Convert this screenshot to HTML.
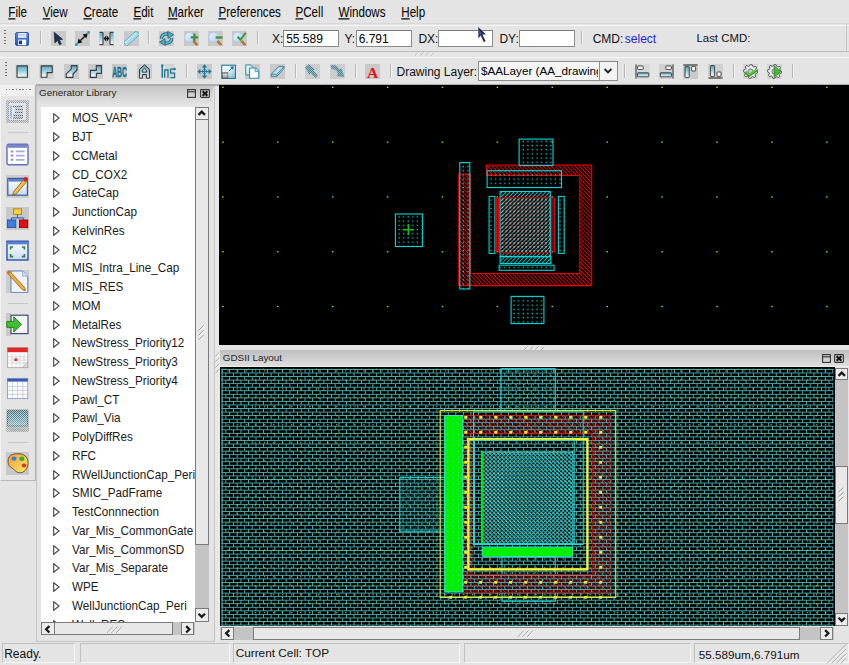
<!DOCTYPE html>
<html><head><meta charset="utf-8"><title>Layout Editor</title>
<style>
html,body{margin:0;padding:0;}
body{width:849px;height:665px;overflow:hidden;position:relative;background:#e4e4e4;font-family:"Liberation Sans", sans-serif;}
.t{position:absolute;white-space:nowrap;}
.b{position:absolute;box-sizing:border-box;}
u{text-decoration:underline;text-underline-offset:1px;}
</style></head><body>

<svg width="0" height="0" style="position:absolute"><defs>

<linearGradient id="gTeal" x1="0" y1="0" x2="0" y2="1"><stop offset="0" stop-color="#5aa8c0"/><stop offset="0.45" stop-color="#9ccfdc"/><stop offset="1" stop-color="#ffffff"/></linearGradient>
<linearGradient id="gTealD" x1="0" y1="0" x2="1" y2="1"><stop offset="0" stop-color="#ffffff"/><stop offset="0.5" stop-color="#d8eef4"/><stop offset="1" stop-color="#6ab4c8"/></linearGradient>
<linearGradient id="gBlue" x1="0" y1="0" x2="0" y2="1"><stop offset="0" stop-color="#5a88e0"/><stop offset="1" stop-color="#2a58b8"/></linearGradient>
<linearGradient id="gMag" x1="0" y1="0" x2="1" y2="1"><stop offset="0" stop-color="#f4f8ff"/><stop offset="1" stop-color="#a8c8f0"/></linearGradient>
<linearGradient id="gWin" x1="0" y1="0" x2="0" y2="1"><stop offset="0" stop-color="#ffffff"/><stop offset="1" stop-color="#c8daf4"/></linearGradient>
<linearGradient id="gPal" x1="0" y1="0" x2="1" y2="1"><stop offset="0" stop-color="#f09a40"/><stop offset="1" stop-color="#f4f060"/></linearGradient>
<linearGradient id="gMon" x1="0" y1="0" x2="0" y2="1"><stop offset="0" stop-color="#2a6a78"/><stop offset="1" stop-color="#8ab8c4"/></linearGradient>
<pattern id="pChk" patternUnits="userSpaceOnUse" width="2" height="2"><rect width="1" height="1" fill="#e4e4e4"/><rect x="1" y="1" width="1" height="1" fill="#e4e4e4"/></pattern>

<pattern id="pDotC" patternUnits="userSpaceOnUse" width="4.6" height="4.2" x="0.8" y="0.6"><rect x="1.5" y="1.5" width="1.25" height="1.25" fill="#10dede"/></pattern>
<pattern id="pHatchR" patternUnits="userSpaceOnUse" width="2.8" height="2.8" patternTransform="rotate(-45)"><rect x="0" y="0" width="0.95" height="2.8" fill="#e80000"/></pattern>
<pattern id="pHatchR2" patternUnits="userSpaceOnUse" width="2.8" height="2.8" patternTransform="rotate(-45)"><rect x="0" y="0" width="0.8" height="2.8" fill="#d00000"/></pattern>
<pattern id="pHatchRg" patternUnits="userSpaceOnUse" width="2.7" height="2.7" patternTransform="rotate(-45)"><rect x="0" y="0" width="1.0" height="2.7" fill="#e00000"/></pattern>
<pattern id="pHatchC2" patternUnits="userSpaceOnUse" width="2.8" height="2.8" patternTransform="rotate(-45)"><rect x="0" y="0" width="0.9" height="2.8" fill="#00d0d0"/></pattern>
<pattern id="pRedDot" patternUnits="userSpaceOnUse" width="3.96" height="3.96" x="481" y="452"><rect x="1.5" y="0.6" width="1.4" height="1.2" fill="#e81010"/></pattern>
<pattern id="pDotW" patternUnits="userSpaceOnUse" width="3.96" height="3.96" x="500" y="197.6"><rect x="1.2" y="1.2" width="1.4" height="1.4" fill="#d8f0f0" opacity="0.85"/></pattern>
<pattern id="pDotG" patternUnits="userSpaceOnUse" width="5.4" height="5.4" x="447" y="418"><rect x="0" y="0" width="1.1" height="1.1" fill="#40d8b0"/></pattern>
<pattern id="pHatchCt" patternUnits="userSpaceOnUse" width="2.8" height="2.8" patternTransform="rotate(45)"><rect x="0" y="0" width="0.85" height="2.8" fill="#10d8d8"/></pattern>
<pattern id="pHatchC2t" patternUnits="userSpaceOnUse" width="2.8" height="2.8" patternTransform="rotate(-45)"><rect x="0" y="0" width="0.85" height="2.8" fill="#10d8d8"/></pattern>
<pattern id="pDotWg" patternUnits="userSpaceOnUse" width="3.96" height="3.96" x="482" y="453.4"><rect x="0" y="0" width="1.2" height="1.2" fill="#d0e8d8" opacity="0.7"/></pattern>
<pattern id="pHatchC" patternUnits="userSpaceOnUse" width="2.8" height="2.8" patternTransform="rotate(45)"><rect x="0" y="0" width="0.9" height="2.8" fill="#00d0d0"/></pattern>
<pattern id="pHatchCdim" patternUnits="userSpaceOnUse" width="2.8" height="2.8" patternTransform="rotate(45)"><rect x="0" y="0" width="0.6" height="2.8" fill="#107878"/></pattern>
<pattern id="pDotCdim" patternUnits="userSpaceOnUse" width="4.5" height="4.5"><rect x="1.5" y="1.5" width="1.2" height="1.2" fill="#10b0b0"/></pattern>
<pattern id="pBrick" patternUnits="userSpaceOnUse" x="221.4" y="369" width="7.54" height="7.1"><rect x="0" y="0" width="7.54" height="0.9" fill="#4ab0b0"/><rect x="0" y="3.55" width="7.54" height="0.9" fill="#4ab0b0"/><rect x="0" y="0" width="0.95" height="3.55" fill="#4ab0b0"/><rect x="3.77" y="3.55" width="0.95" height="3.55" fill="#4ab0b0"/></pattern>
<pattern id="pYDot" patternUnits="userSpaceOnUse" x="227.4" y="370.3" width="9.05" height="8.95"><rect x="0" y="0" width="1.3" height="1.3" fill="#c8c820" opacity="0.8"/></pattern>
</defs></svg>
<div class="b" style="left:0.00px;top:0.00px;width:849.00px;height:23.00px;background:#e4e4e4;"></div>
<div class="b" style="left:0.00px;top:23.00px;width:849.00px;height:1.00px;background:#d8d8d8;"></div>
<div class="t" style="left:8.30px;top:6.98px;font-size:11.6px;line-height:11.6px;color:#000;transform:scaleY(1.22);transform-origin:0 9.82px;text-underline-offset:1.2px;"><u>F</u>ile</div>
<div class="t" style="left:42.70px;top:6.98px;font-size:11.6px;line-height:11.6px;color:#000;transform:scaleY(1.22);transform-origin:0 9.82px;text-underline-offset:1.2px;"><u>V</u>iew</div>
<div class="t" style="left:83.40px;top:6.98px;font-size:11.6px;line-height:11.6px;color:#000;transform:scaleY(1.22);transform-origin:0 9.82px;text-underline-offset:1.2px;"><u>C</u>reate</div>
<div class="t" style="left:133.40px;top:6.98px;font-size:11.6px;line-height:11.6px;color:#000;transform:scaleY(1.22);transform-origin:0 9.82px;text-underline-offset:1.2px;"><u>E</u>dit</div>
<div class="t" style="left:167.90px;top:6.98px;font-size:11.6px;line-height:11.6px;color:#000;transform:scaleY(1.22);transform-origin:0 9.82px;text-underline-offset:1.2px;"><u>M</u>arker</div>
<div class="t" style="left:218.40px;top:6.98px;font-size:11.6px;line-height:11.6px;color:#000;transform:scaleY(1.22);transform-origin:0 9.82px;text-underline-offset:1.2px;"><u>P</u>references</div>
<div class="t" style="left:295.50px;top:6.98px;font-size:11.6px;line-height:11.6px;color:#000;transform:scaleY(1.22);transform-origin:0 9.82px;text-underline-offset:1.2px;"><u>P</u>Cell</div>
<div class="t" style="left:338.50px;top:6.98px;font-size:11.6px;line-height:11.6px;color:#000;transform:scaleY(1.22);transform-origin:0 9.82px;text-underline-offset:1.2px;"><u>W</u>indows</div>
<div class="t" style="left:401.30px;top:6.98px;font-size:11.6px;line-height:11.6px;color:#000;transform:scaleY(1.22);transform-origin:0 9.82px;text-underline-offset:1.2px;"><u>H</u>elp</div>
<div class="b" style="left:0.00px;top:25.00px;width:849.00px;height:27.00px;background:#e4e4e4;border-top:1px solid #f8f8f8;border-bottom:1px solid #bcbcbc;"></div>
<div class="b" style="left:4.00px;top:30.00px;width:2.00px;height:1.20px;background:#707070;"></div>
<div class="b" style="left:4.00px;top:33.30px;width:2.00px;height:1.20px;background:#707070;"></div>
<div class="b" style="left:4.00px;top:36.60px;width:2.00px;height:1.20px;background:#707070;"></div>
<div class="b" style="left:4.00px;top:39.90px;width:2.00px;height:1.20px;background:#707070;"></div>
<div class="b" style="left:4.00px;top:43.20px;width:2.00px;height:1.20px;background:#707070;"></div>
<svg class="b" style="left:15px;top:31.8px" width="14.2" height="14" viewBox="0 0 14.2 14"><rect x="0.6" y="0.6" width="13" height="12.8" rx="1.2" fill="url(#gBlue)" stroke="#2448a0" stroke-width="0.9"/><rect x="3" y="1" width="8.4" height="4.8" fill="#e6ecf8"/><rect x="3" y="2.6" width="8.4" height="0.8" fill="#9ab0e0"/><rect x="3.2" y="7.6" width="8" height="5.6" fill="#f8faff"/><rect x="4" y="8.6" width="3" height="3.6" fill="#1a3c90"/></svg>
<svg class="b" style="left:51.2px;top:31.2px" width="15" height="15" viewBox="0 0 15 15"><rect width="15" height="15" fill="#c9c9c9"/><path d="M3.2 1.2 L11.6 8.3 L8.3 8.7 L10.3 12.9 L8.5 13.8 L6.6 9.5 L3.9 11.9 Z" fill="#1d3350" stroke="#0e1a2c" stroke-width="0.6" stroke-linejoin="round"/></svg>
<svg class="b" style="left:75.2px;top:31.2px" width="15" height="15" viewBox="0 0 15 15"><rect width="15" height="15" fill="#c9c9c9"/><line x1="3.2" y1="11.8" x2="11.8" y2="3.2" stroke="#111" stroke-width="1.3"/><path d="M12.6 2.4 L7.6 3.6 L11.4 7.4 Z" fill="#111"/><path d="M2.4 12.6 L3.6 7.6 L7.4 11.4 Z" fill="#111"/><circle cx="13.6" cy="1.4" r="1.4" fill="#1a98c0"/><circle cx="1.4" cy="13.6" r="1.4" fill="#1a98c0"/></svg>
<svg class="b" style="left:99px;top:31.2px" width="15" height="15" viewBox="0 0 15 15"><rect width="15" height="15" fill="#c9c9c9"/><path d="M0.8 1.8 H3.6 V13.2 H0.8 Z" fill="url(#gTeal)"/><path d="M0.6 1.4 H4 V13.6 H0.6" stroke="#2a3038" stroke-width="1" fill="none"/><g transform="translate(15 0) scale(-1 1)"><path d="M0.8 1.8 H3.6 V13.2 H0.8 Z" fill="url(#gTeal)"/><path d="M0.6 1.4 H4 V13.6 H0.6" stroke="#2a3038" stroke-width="1" fill="none"/></g><line x1="6" y1="7.5" x2="9" y2="7.5" stroke="#111" stroke-width="1"/><path d="M4.6 7.5 L7.2 4.6 V10.4 Z M10.4 7.5 L7.8 4.6 V10.4 Z" fill="#111"/></svg>
<svg class="b" style="left:123.8px;top:31.2px" width="15" height="15" viewBox="0 0 15 15"><rect width="15" height="15" fill="#c9c9c9"/><g transform="rotate(-42 7.5 7.5)"><rect x="-1.2" y="5" width="17.4" height="5" rx="0.6" fill="#a6dcea" stroke="#5aa0b8" stroke-width="0.8"/><path d="M1 5.4 V7.2 M3 5.4 V6.6 M5 5.4 V7.2 M7 5.4 V6.6 M9 5.4 V7.2 M11 5.4 V6.6 M13 5.4 V7.2" stroke="#ffffff" stroke-width="0.7"/></g></svg>
<svg class="b" style="left:159.2px;top:31.2px" width="15" height="15" viewBox="0 0 15 15"><rect width="15" height="15" fill="#c9c9c9"/><path d="M2.4 8 C2.2 4 6 2 10 3.4" stroke="#1e5a6a" stroke-width="3.2" fill="none"/><path d="M2.4 8 C2.2 4 6 2 10 3.4" stroke="#5ab8cc" stroke-width="1.8" fill="none"/><path d="M8.6 0.4 L14.6 3.8 L9 7.4 Z" fill="#4aa8c0" stroke="#1e5a6a" stroke-width="0.7"/><path d="M12.6 7 C12.8 11 9 13 5 11.6" stroke="#1e5a6a" stroke-width="3.2" fill="none"/><path d="M12.6 7 C12.8 11 9 13 5 11.6" stroke="#5ab8cc" stroke-width="1.8" fill="none"/><path d="M6.4 14.6 L0.4 11.2 L6 7.6 Z" fill="#4aa8c0" stroke="#1e5a6a" stroke-width="0.7"/></svg>
<svg class="b" style="left:184.1px;top:31.2px" width="15" height="15" viewBox="0 0 15 15"><rect width="15" height="15" fill="#c9c9c9"/><line x1="9" y1="9.5" x2="12.6" y2="13.4" stroke="#b87838" stroke-width="2.6" stroke-linecap="round"/><circle cx="5.8" cy="6.4" r="4.9" fill="url(#gMag)" stroke="#b0c8ec" stroke-width="0.8"/><circle cx="5.4" cy="6" r="2.6" fill="none" stroke="#d8e6fa" stroke-width="0.8"/><path d="M10.4 2.6 V10 M6.8 6.3 H14.2" stroke="#3a9a3a" stroke-width="2.3"/></svg>
<svg class="b" style="left:208.2px;top:31.2px" width="15" height="15" viewBox="0 0 15 15"><rect width="15" height="15" fill="#c9c9c9"/><line x1="9" y1="9.5" x2="12.6" y2="13.4" stroke="#b87838" stroke-width="2.6" stroke-linecap="round"/><circle cx="5.8" cy="6.4" r="4.9" fill="url(#gMag)" stroke="#b0c8ec" stroke-width="0.8"/><circle cx="5.4" cy="6" r="2.6" fill="none" stroke="#d8e6fa" stroke-width="0.8"/><path d="M7.6 6.5 H14.6" stroke="#3a9a3a" stroke-width="2.4"/></svg>
<svg class="b" style="left:232.2px;top:31.2px" width="15" height="15" viewBox="0 0 15 15"><rect width="15" height="15" fill="#c9c9c9"/><line x1="9" y1="9.5" x2="12.6" y2="13.4" stroke="#b87838" stroke-width="2.6" stroke-linecap="round"/><circle cx="5.8" cy="6.4" r="4.9" fill="url(#gMag)" stroke="#b0c8ec" stroke-width="0.8"/><circle cx="5.4" cy="6" r="2.6" fill="none" stroke="#d8e6fa" stroke-width="0.8"/><path d="M5.6 5.8 L8.4 8.8 L13.8 1.8" stroke="#3a9a3a" stroke-width="2" fill="none"/></svg>
<div class="b" style="left:39.50px;top:31.40px;width:1.00px;height:13.10px;background:#b8b8b8;"></div>
<div class="b" style="left:40.50px;top:31.40px;width:1.00px;height:13.10px;background:#f4f4f4;"></div>
<div class="b" style="left:148.00px;top:31.40px;width:1.00px;height:13.10px;background:#b8b8b8;"></div>
<div class="b" style="left:149.00px;top:31.40px;width:1.00px;height:13.10px;background:#f4f4f4;"></div>
<div class="b" style="left:257.00px;top:31.40px;width:1.00px;height:13.10px;background:#b8b8b8;"></div>
<div class="b" style="left:258.00px;top:31.40px;width:1.00px;height:13.10px;background:#f4f4f4;"></div>
<div class="t" style="left:272.00px;top:32.84px;font-size:12px;line-height:12px;color:#111;">X:</div>
<div class="b" style="left:283.20px;top:29.70px;width:55.80px;height:17.60px;background:#fff;border:1px solid #8c8c8c;border-top-color:#7a7a7a;"></div>
<div class="t" style="left:286.20px;top:32.84px;font-size:12px;line-height:12px;color:#000;">55.589</div>
<div class="t" style="left:344.50px;top:32.84px;font-size:12px;line-height:12px;color:#111;">Y:</div>
<div class="b" style="left:355.70px;top:29.70px;width:56.30px;height:17.60px;background:#fff;border:1px solid #8c8c8c;border-top-color:#7a7a7a;"></div>
<div class="t" style="left:358.70px;top:32.84px;font-size:12px;line-height:12px;color:#000;">6.791</div>
<div class="t" style="left:418.40px;top:32.84px;font-size:12px;line-height:12px;color:#111;">DX:</div>
<div class="b" style="left:438.40px;top:29.70px;width:55.10px;height:17.60px;background:#fff;border:1px solid #8c8c8c;border-top-color:#7a7a7a;"></div>
<div class="t" style="left:499.40px;top:32.84px;font-size:12px;line-height:12px;color:#111;">DY:</div>
<div class="b" style="left:519.40px;top:29.70px;width:55.60px;height:17.60px;background:#fff;border:1px solid #8c8c8c;border-top-color:#7a7a7a;"></div>
<div class="b" style="left:580.80px;top:31.40px;width:1.00px;height:13.10px;background:#b8b8b8;"></div>
<div class="b" style="left:581.80px;top:31.40px;width:1.00px;height:13.10px;background:#f4f4f4;"></div>
<div class="t" style="left:592.70px;top:32.84px;font-size:12px;line-height:12px;color:#111;">CMD:</div>
<div class="t" style="left:624.80px;top:32.84px;font-size:12px;line-height:12px;color:#2222dd;">select</div>
<div class="t" style="left:696.50px;top:33.35px;font-size:11.4px;line-height:11.4px;color:#111;">Last CMD:</div>
<div class="b" style="left:846.00px;top:24.00px;width:1.00px;height:27.00px;background:#c8c8c8;"></div>
<div class="b" style="left:0.00px;top:57.00px;width:849.00px;height:28.00px;background:#e4e4e4;border-top:1px solid #f8f8f8;"></div>
<div class="b" style="left:4.70px;top:62.00px;width:2.00px;height:1.20px;background:#707070;"></div>
<div class="b" style="left:4.70px;top:65.30px;width:2.00px;height:1.20px;background:#707070;"></div>
<div class="b" style="left:4.70px;top:68.60px;width:2.00px;height:1.20px;background:#707070;"></div>
<div class="b" style="left:4.70px;top:71.90px;width:2.00px;height:1.20px;background:#707070;"></div>
<div class="b" style="left:4.70px;top:75.20px;width:2.00px;height:1.20px;background:#707070;"></div>
<svg class="b" style="left:15.3px;top:63.8px" width="15" height="15" viewBox="0 0 15 15"><rect width="15" height="15" fill="#dcdcd6"/><path d="M2 1.9 H12.4 V13.2 H2 Z" fill="url(#gTeal)" stroke="#353b42" stroke-width="1.1" stroke-linejoin="round"/></svg>
<svg class="b" style="left:39.4px;top:63.8px" width="15" height="15" viewBox="0 0 15 15"><rect width="15" height="15" fill="#d4d4d0"/><path d="M2.2 1.9 H13.2 V8.6 H8 V13.2 H2.2 Z" fill="url(#gTeal)" stroke="#353b42" stroke-width="1.1" stroke-linejoin="round"/></svg>
<svg class="b" style="left:64.2px;top:63.8px" width="15" height="15" viewBox="0 0 15 15"><rect width="15" height="15" fill="#c9c9c9"/><path d="M7.2 1.6 H13 V6 L9 10 V13.4 H2.2 V9.8 L7.2 5.2 Z" fill="url(#gTeal)" stroke="#353b42" stroke-width="1.1" stroke-linejoin="round"/></svg>
<svg class="b" style="left:88px;top:63.8px" width="15" height="15" viewBox="0 0 15 15"><rect width="15" height="15" fill="#c9c9c9"/><path d="M8.3 1.6 H13.4 V9.4 H8.4 V13.4 H2.4 V6.4 H8.3 Z" fill="url(#gTeal)" stroke="#353b42" stroke-width="1.1" stroke-linejoin="round"/></svg>
<svg class="b" style="left:112.2px;top:63.8px" width="15" height="15" viewBox="0 0 15 15"><rect width="15" height="15" fill="#c9c9c9"/><text x="0.2" y="13.2" font-family="Liberation Sans" font-weight="bold" font-size="14.6" fill="#1a7090" stroke="#1a7090" stroke-width="0.5" textLength="14.6" lengthAdjust="spacingAndGlyphs">ABC</text></svg>
<svg class="b" style="left:137px;top:63.8px" width="15" height="15" viewBox="0 0 15 15"><rect width="15" height="15" fill="#c9c9c9"/><path d="M2.6 14.2 V5.4 L7.5 0.8 L12.4 5.4 V14.2 H9.6 V10.6 H5.4 V14.2 Z" fill="url(#gTeal)" stroke="#2a2e34" stroke-width="1" stroke-linejoin="round"/><path d="M5.4 8.2 V6.2 L7.5 4.2 L9.6 6.2 V8.2 Z" fill="#c9c9c9" stroke="#2a2e34" stroke-width="0.9"/></svg>
<svg class="b" style="left:160.8px;top:63.8px" width="15" height="15" viewBox="0 0 15 15"><rect x="4" y="0" width="10" height="15" fill="#d4d4d4"/><path d="M1.2 1.5 V13.8" stroke="#1e7896" stroke-width="1.5"/><circle cx="1.3" cy="1.6" r="1.3" fill="#1e7896"/><path d="M3.6 13.8 V6 H7 V13.8" stroke="#1e7896" stroke-width="1.3" fill="none"/><path d="M13.4 5.2 H9.6 V9.2 H13.6 V13.6 H9.4" stroke="#1e7896" stroke-width="1.3" fill="none"/><circle cx="13.6" cy="5" r="1.3" fill="#1e7896"/></svg>
<svg class="b" style="left:197px;top:63.8px" width="15" height="15" viewBox="0 0 15 15"><rect width="15" height="15" fill="#c9c9c9"/><path d="M7.5 2.4 V12.6 M2.4 7.5 H12.6" stroke="#1e7896" stroke-width="1.1"/><path d="M7.5 0.3 L10.2 3.4 H4.8 Z M7.5 14.7 L10.2 11.6 H4.8 Z M0.3 7.5 L3.4 4.8 V10.2 Z M14.7 7.5 L11.6 4.8 V10.2 Z" fill="#1e7896"/><path d="M4.4 7.5 L7.5 4.4 L10.6 7.5 L7.5 10.6 Z" fill="none" stroke="#1e7896" stroke-width="0.8"/></svg>
<svg class="b" style="left:221px;top:63.8px" width="15" height="15" viewBox="0 0 15 15"><rect x="0.7" y="1.2" width="13.8" height="13.2" fill="url(#gTealD)" stroke="#1e7896" stroke-width="1.1"/><rect x="1.4" y="8.8" width="5.4" height="5.2" fill="#b0b4b8" stroke="#555" stroke-width="0.8"/><path d="M1.4 10.6 H6.8" stroke="#e8e8e8" stroke-width="0.8"/><path d="M8 7 L12 3" stroke="#1e7896" stroke-width="1"/><path d="M12.8 2.2 L9 2.8 L12.2 6 Z" fill="#1e7896"/></svg>
<svg class="b" style="left:245px;top:63.8px" width="15" height="15" viewBox="0 0 15 15"><rect width="15" height="15" fill="#c9c9c9"/><path d="M0.8 1 H5.6 L7.8 3.2 V11 H0.8 Z" fill="url(#gTealD)" stroke="#2a90b0" stroke-width="1"/><path d="M4.6 4 H10.6 L13.8 7.2 V14.2 H4.6 Z" fill="#ffffff" stroke="#2a90b0" stroke-width="1.1"/><path d="M10.2 4 V7.6 H13.8" fill="#c0e0ea" stroke="#2a90b0" stroke-width="0.8"/></svg>
<svg class="b" style="left:269.6px;top:63.8px" width="15" height="15" viewBox="0 0 15 15"><rect width="15" height="15" fill="#c9c9c9"/><path d="M1.2 10.4 L8.6 2.6 H14 L14 4.4 L6.8 12.4 H1.2 Z" fill="#bde2ee" stroke="#3a7f96" stroke-width="1"/><path d="M1.2 10.4 H6.8 L14 2.6 M6.8 10.4 V12.4" stroke="#3a7f96" stroke-width="0.9" fill="none"/></svg>
<svg class="b" style="left:305px;top:63.8px" width="15" height="15" viewBox="0 0 15 15"><rect width="15" height="15" fill="#c4c4c4"/><path d="M3.8 0.8 L9.6 5.6 L7.4 6.2 L12.4 11.6 L10.6 13.6 L5.4 8 L4.6 10.2 L0.6 3.6 Z" fill="#3a8898" stroke="#2a6878" stroke-width="0.6"/><rect width="15" height="15" fill="url(#pChk)" opacity="0.55"/></svg>
<svg class="b" style="left:329.6px;top:63.8px" width="15" height="15" viewBox="0 0 15 15"><rect width="15" height="15" fill="#c4c4c4"/><path d="M1.2 1.6 C4.6 1 8 2.4 9.4 6 L11.2 4.8 L13.8 12.4 L7 11.8 L8.4 9.8 C7.6 6.6 5 4.6 1.8 4.6 Z" fill="#3a8898" stroke="#2a6878" stroke-width="0.6"/><rect width="15" height="15" fill="url(#pChk)" opacity="0.55"/></svg>
<svg class="b" style="left:365px;top:63.8px" width="15" height="15" viewBox="0 0 15 15"><rect width="15" height="15" fill="#c9c9c9"/><text x="7.6" y="13.6" text-anchor="middle" font-family="Liberation Serif" font-weight="bold" font-size="15.5" fill="#ee1010">A</text></svg>
<svg class="b" style="left:634.8px;top:63.8px" width="15" height="15" viewBox="0 0 15 15"><rect width="15" height="15" fill="#d8d8d8"/><path d="M1 0.5 V14.5" stroke="#333" stroke-width="1"/><rect x="2.6" y="2" width="5.6" height="3.4" rx="0.6" fill="#fff" stroke="#333" stroke-width="0.9"/><rect x="2.6" y="8.8" width="11.2" height="4" rx="0.6" fill="url(#gTeal)" stroke="#333" stroke-width="0.9"/></svg>
<svg class="b" style="left:658.8px;top:63.8px" width="15" height="15" viewBox="0 0 15 15"><rect width="15" height="15" fill="#d0d0d0"/><path d="M14 0.5 V14.5" stroke="#333" stroke-width="1"/><rect x="6.8" y="2" width="5.6" height="3.4" rx="0.6" fill="#fff" stroke="#333" stroke-width="0.9"/><rect x="1.2" y="8.8" width="11.2" height="4" rx="0.6" fill="url(#gTeal)" stroke="#333" stroke-width="0.9"/></svg>
<svg class="b" style="left:683.4px;top:63.8px" width="15" height="15" viewBox="0 0 15 15"><rect width="15" height="15" fill="#c9c9c9"/><path d="M0.5 1 H14.5" stroke="#444" stroke-width="1.2"/><rect x="2" y="2.6" width="4.2" height="10.8" rx="0.6" fill="url(#gTeal)" stroke="#333" stroke-width="0.9"/><rect x="8.6" y="2.6" width="4" height="4.4" rx="0.6" fill="#fff" stroke="#333" stroke-width="0.9"/></svg>
<svg class="b" style="left:707.8px;top:63.8px" width="15" height="15" viewBox="0 0 15 15"><rect width="15" height="15" fill="#d0d0d0"/><path d="M0.5 14 H14.5" stroke="#333" stroke-width="1.1"/><rect x="2.4" y="1.6" width="4.2" height="10.8" rx="0.6" fill="url(#gTeal)" stroke="#333" stroke-width="0.9"/><rect x="9" y="8" width="4" height="4.4" rx="0.6" fill="#fff" stroke="#333" stroke-width="0.9"/></svg>
<svg class="b" style="left:742.8px;top:63.8px" width="15" height="15" viewBox="0 0 15 15"><rect width="15" height="15" fill="#d4d4d4"/><polygon points="14.70,7.50 14.56,8.90 12.67,9.64 12.16,10.61 12.59,12.59 11.50,13.49 9.64,12.67 8.59,12.99 7.50,14.70 6.10,14.56 5.36,12.67 4.39,12.16 2.41,12.59 1.51,11.50 2.33,9.64 2.01,8.59 0.30,7.50 0.44,6.10 2.33,5.36 2.84,4.39 2.41,2.41 3.50,1.51 5.36,2.33 6.41,2.01 7.50,0.30 8.90,0.44 9.64,2.33 10.61,2.84 12.59,2.41 13.49,3.50 12.67,5.36 12.99,6.41" fill="#e8ecf0" stroke="#444" stroke-width="0.9"/><circle cx="7.5" cy="7.5" r="2.6" fill="#c8c8c8" stroke="#555" stroke-width="0.7"/><path d="M2.4 8 L6 11.6 L14.4 5.6" stroke="#30a020" stroke-width="2.6" fill="none"/><path d="M2.6 7.6 L6 10.8 L14.2 5" stroke="#60d040" stroke-width="1.2" fill="none"/></svg>
<svg class="b" style="left:767.2px;top:63.8px" width="15" height="15" viewBox="0 0 15 15"><rect width="15" height="15" fill="#d4d4d4"/><polygon points="14.70,7.50 14.56,8.90 12.67,9.64 12.16,10.61 12.59,12.59 11.50,13.49 9.64,12.67 8.59,12.99 7.50,14.70 6.10,14.56 5.36,12.67 4.39,12.16 2.41,12.59 1.51,11.50 2.33,9.64 2.01,8.59 0.30,7.50 0.44,6.10 2.33,5.36 2.84,4.39 2.41,2.41 3.50,1.51 5.36,2.33 6.41,2.01 7.50,0.30 8.90,0.44 9.64,2.33 10.61,2.84 12.59,2.41 13.49,3.50 12.67,5.36 12.99,6.41" fill="#e8ecf0" stroke="#444" stroke-width="0.9"/><circle cx="7.5" cy="7.5" r="2.6" fill="#c8c8c8" stroke="#555" stroke-width="0.7"/><path d="M7.2 1.8 L13.8 7.5 L7.2 13.2 Z" fill="#40c030" stroke="#207010" stroke-width="0.7"/></svg>
<div class="b" style="left:186.00px;top:64.00px;width:1.00px;height:14.00px;background:#b8b8b8;"></div>
<div class="b" style="left:187.00px;top:64.00px;width:1.00px;height:14.00px;background:#f4f4f4;"></div>
<div class="b" style="left:294.60px;top:64.00px;width:1.00px;height:14.00px;background:#b8b8b8;"></div>
<div class="b" style="left:295.60px;top:64.00px;width:1.00px;height:14.00px;background:#f4f4f4;"></div>
<div class="b" style="left:354.70px;top:64.00px;width:1.00px;height:14.00px;background:#b8b8b8;"></div>
<div class="b" style="left:355.70px;top:64.00px;width:1.00px;height:14.00px;background:#f4f4f4;"></div>
<div class="b" style="left:390.40px;top:64.00px;width:1.00px;height:14.00px;background:#b8b8b8;"></div>
<div class="b" style="left:391.40px;top:64.00px;width:1.00px;height:14.00px;background:#f4f4f4;"></div>
<div class="b" style="left:623.50px;top:64.00px;width:1.00px;height:14.00px;background:#b8b8b8;"></div>
<div class="b" style="left:624.50px;top:64.00px;width:1.00px;height:14.00px;background:#f4f4f4;"></div>
<div class="b" style="left:732.50px;top:64.00px;width:1.00px;height:14.00px;background:#b8b8b8;"></div>
<div class="b" style="left:733.50px;top:64.00px;width:1.00px;height:14.00px;background:#f4f4f4;"></div>
<div class="b" style="left:792.00px;top:64.00px;width:1.00px;height:14.00px;background:#b8b8b8;"></div>
<div class="b" style="left:793.00px;top:64.00px;width:1.00px;height:14.00px;background:#f4f4f4;"></div>
<div class="t" style="left:396.50px;top:65.84px;font-size:12px;line-height:12px;color:#111;">Drawing Layer:</div>
<div class="b" style="left:477.70px;top:60.50px;width:140.50px;height:20.50px;background:#f6f6f6;border:1px solid #8c8c8c;"></div>
<div class="b" style="left:480px;top:62px;width:118px;height:18px;overflow:hidden;"><div class="t" style="left:1px;top:3.2px;font-size:11.7px;line-height:12px;color:#000;">$AALayer (AA_drawing</div></div>
<div class="b" style="left:598.50px;top:60.50px;width:19.70px;height:20.50px;background:#f4f4f4;border:1px solid #8c8c8c;"></div>
<svg class="b" style="left:603.4px;top:66.6px" width="10" height="8" viewBox="0 0 10 8"><path d="M1.6 2 L5 5.4 L8.4 2" stroke="#222" stroke-width="1.9" fill="none"/></svg>
<div class="b" style="left:0.00px;top:85.00px;width:35.50px;height:396.00px;background:#e4e4e4;border-left:1px solid #f4f4f4;border-right:1.5px solid #b4b4b4;border-bottom:1.5px solid #b8b8b8;"></div>
<div class="b" style="left:1.00px;top:85.00px;width:33.00px;height:10.50px;background:#f0f0f0;"></div>
<div class="b" style="left:5.60px;top:89.30px;width:1.50px;height:1.20px;background:#7a7a7a;"></div>
<div class="b" style="left:8.95px;top:89.30px;width:1.50px;height:1.20px;background:#7a7a7a;"></div>
<div class="b" style="left:12.30px;top:89.30px;width:1.50px;height:1.20px;background:#7a7a7a;"></div>
<div class="b" style="left:15.65px;top:89.30px;width:1.50px;height:1.20px;background:#7a7a7a;"></div>
<div class="b" style="left:19.00px;top:89.30px;width:1.50px;height:1.20px;background:#7a7a7a;"></div>
<div class="b" style="left:22.35px;top:89.30px;width:1.50px;height:1.20px;background:#7a7a7a;"></div>
<div class="b" style="left:25.70px;top:89.30px;width:1.50px;height:1.20px;background:#7a7a7a;"></div>
<div class="b" style="left:29.05px;top:89.30px;width:1.50px;height:1.20px;background:#7a7a7a;"></div>
<svg class="b" style="left:6.3px;top:99.8px" width="23" height="23" viewBox="0 0 23 23"><rect width="23" height="23" fill="#a8a8a8"/><rect x="2.5" y="2.5" width="18" height="18" fill="#dfe6ee" stroke="#8898a8" stroke-width="1"/><path d="M7 6.5 H17 M9 9.5 H17 M9 12.5 H17 M7 15.5 H17 M7 18 H17" stroke="#505860" stroke-width="1.3"/><path d="M5 5.5 V18.5" stroke="#5a90d0" stroke-width="1.6"/><rect width="23" height="23" fill="url(#pChk)" opacity="0.85"/></svg>
<svg class="b" style="left:6.3px;top:143px" width="23" height="23" viewBox="0 0 23 23"><rect x="1" y="1.2" width="21" height="20.6" rx="1.5" fill="#fff" stroke="#6470b8" stroke-width="1.4"/><rect x="1.6" y="1.6" width="19.8" height="3.2" fill="#7a86cc"/><path d="M4.8 8.4 H7.4 M4.8 12.6 H7.4 M4.8 16.8 H7.4" stroke="#8890d0" stroke-width="2"/><path d="M9.8 8.4 H18.6 M9.8 12.6 H18.6 M9.8 16.8 H18.6" stroke="#a8acd8" stroke-width="1.8"/></svg>
<svg class="b" style="left:6.3px;top:174.8px" width="23" height="23" viewBox="0 0 23 23"><rect width="23" height="23" fill="#cccccc"/><rect x="1.8" y="3.4" width="19.6" height="16.8" fill="url(#gWin)" stroke="#3a5a98" stroke-width="1.2"/><rect x="2.4" y="4" width="18.4" height="2.6" fill="#5a80c8"/><path d="M7.6 16.8 L17.4 5 L20 7.4 L10.2 19 L6.8 19.8 Z" fill="#f0c040" stroke="#8a5a20" stroke-width="0.8"/><circle cx="19.6" cy="4.2" r="2.2" fill="#e02020"/></svg>
<svg class="b" style="left:6.3px;top:207px" width="23" height="23" viewBox="0 0 23 23"><rect width="23" height="23" fill="#c8c8c8"/><rect x="7.6" y="1.8" width="8" height="5.6" fill="#f4d040" stroke="#a08010" stroke-width="0.8"/><path d="M11.5 7.4 V10.8 M5.5 10.8 H17.6 M5.5 10.8 V13 M17.6 10.8 V13" stroke="#3a6ac8" stroke-width="1.2" fill="none"/><rect x="1.4" y="13" width="8.4" height="7.6" fill="#3a80e0" stroke="#1a4aa0" stroke-width="0.8"/><rect x="13.4" y="13" width="8.4" height="7.6" fill="#e01010" stroke="#900000" stroke-width="0.8"/></svg>
<svg class="b" style="left:6.3px;top:238.8px" width="23" height="23" viewBox="0 0 23 23"><rect x="1" y="2.2" width="21" height="18.8" fill="url(#gWin)" stroke="#3050b0" stroke-width="1.4"/><rect x="1.6" y="2.8" width="19.8" height="2.6" fill="#5a80d0"/><path d="M4.6 10.4 V8 H7.2 M15.8 8 H18.4 V10.4 M18.4 15 V17.6 H15.8 M7.2 17.6 H4.6 V15" stroke="#2a8a3a" stroke-width="1.7" fill="none"/></svg>
<svg class="b" style="left:6.3px;top:270.4px" width="23" height="23" viewBox="0 0 23 23"><rect width="23" height="23" fill="#cccccc"/><path d="M5 1 H16.6 L21.8 6.2 V22.6 H5 Z" fill="#eef4fc" stroke="#6a80b8" stroke-width="1"/><path d="M16.6 1 V6.2 H21.8" fill="#d8e4f4" stroke="#8a9cc8" stroke-width="0.8"/><path d="M1 2.6 L3.2 0.6 L18.6 17.6 L19.4 20.6 L16.4 19.8 Z" fill="#f4b030" stroke="#8a5a18" stroke-width="0.8"/><path d="M1 2.6 L3.2 0.6 L4.6 2.2 L2.4 4.2 Z" fill="#e06040"/></svg>
<svg class="b" style="left:6.3px;top:313.4px" width="23" height="23" viewBox="0 0 23 23"><rect x="0" y="0" width="5" height="23" fill="#c8c8c8"/><rect x="5" y="2.2" width="17" height="18.4" fill="#f4f6fc" stroke="#404a70" stroke-width="1.2"/><path d="M0.8 8.4 H7.8 V3.8 L15.4 11.4 L7.8 19 V14.4 H0.8 Z" fill="#40c030" stroke="#1a7a10" stroke-width="0.9"/></svg>
<svg class="b" style="left:6.3px;top:346px" width="23" height="23" viewBox="0 0 23 23"><rect x="1.4" y="1.6" width="20.4" height="20" fill="#fbfbfb" stroke="#b0b0b0" stroke-width="0.9"/><rect x="1.4" y="1.6" width="20.4" height="4.6" fill="#e02828"/><path d="M6 8 V20.6" stroke="#c8c8c8" stroke-width="0.6"/><path d="M10 8 V20.6" stroke="#c8c8c8" stroke-width="0.6"/><path d="M14 8 V20.6" stroke="#c8c8c8" stroke-width="0.6"/><path d="M18 8 V20.6" stroke="#c8c8c8" stroke-width="0.6"/><path d="M2 11 H21" stroke="#c8c8c8" stroke-width="0.6"/><path d="M2 14 H21" stroke="#c8c8c8" stroke-width="0.6"/><path d="M2 17 H21" stroke="#c8c8c8" stroke-width="0.6"/><rect x="8.4" y="12.4" width="3" height="2.6" fill="#e03030"/><path d="M16 21.6 L21.8 15.8 V21.6 Z" fill="#d8d8d8" stroke="#a0a0a0" stroke-width="0.6"/></svg>
<svg class="b" style="left:6.3px;top:377px" width="23" height="23" viewBox="0 0 23 23"><rect x="1.4" y="1.6" width="20.4" height="20" fill="#fbfcff" stroke="#8a9ac8" stroke-width="0.9"/><rect x="1.4" y="1.6" width="20.4" height="3" fill="#3a5ab0"/><path d="M6.4 5 V21.4" stroke="#c4c8d4" stroke-width="0.8"/><path d="M11.6 5 V21.4" stroke="#c4c8d4" stroke-width="0.8"/><path d="M16.8 5 V21.4" stroke="#c4c8d4" stroke-width="0.8"/><path d="M2 9.4 H21.6" stroke="#c4c8d4" stroke-width="0.8"/><path d="M2 13.4 H21.6" stroke="#c4c8d4" stroke-width="0.8"/><path d="M2 17.4 H21.6" stroke="#c4c8d4" stroke-width="0.8"/></svg>
<svg class="b" style="left:6.3px;top:409px" width="23" height="23" viewBox="0 0 23 23"><rect width="23" height="23" fill="#a8a8a8"/><rect x="1.6" y="1.6" width="19.8" height="15.4" rx="1" fill="url(#gMon)" stroke="#405860" stroke-width="1"/><path d="M6 19.4 H17 L19 22 H4 Z" fill="#8a9aa0"/><rect width="23" height="23" fill="url(#pChk)" opacity="0.8"/></svg>
<svg class="b" style="left:6.3px;top:452px" width="23" height="23" viewBox="0 0 23 23"><rect width="23" height="23" fill="#c8c8c8"/><path d="M2.2 7.4 C3 2.4 9 1.2 14 1.8 C19.6 2.6 22.4 6.6 22 11.6 C21.6 17.6 18 20.8 13.6 20.8 C9.6 20.8 8.6 17.2 5.4 15.6 C2.6 14.2 1.6 11.4 2.2 7.4 Z" fill="url(#gPal)" stroke="#5a3a10" stroke-width="0.8"/><ellipse cx="8" cy="6.6" rx="2.6" ry="2.2" fill="#3a7ae0"/><ellipse cx="15.8" cy="6.8" rx="2.6" ry="2.2" fill="#30b030"/><ellipse cx="18" cy="13.6" rx="2.2" ry="2" fill="#e03030"/></svg>
<div class="b" style="left:7.70px;top:132.30px;width:20.30px;height:1.00px;background:#c4c4c4;"></div>
<div class="b" style="left:7.70px;top:303.00px;width:20.30px;height:1.00px;background:#c4c4c4;"></div>
<div class="b" style="left:7.70px;top:441.50px;width:20.30px;height:1.00px;background:#c4c4c4;"></div>
<div class="b" style="left:35.50px;top:85.50px;width:179.50px;height:556.50px;border:1.2px solid #c4c4c4;"></div>
<div class="b" style="left:215.00px;top:85.00px;width:4.50px;height:557.00px;background:#e8e8e8;"></div>
<div class="b" style="left:35.50px;top:84.30px;width:813.50px;height:1.60px;background:#acacac;"></div>
<div class="b" style="left:36.50px;top:86.00px;width:176.50px;height:17.50px;background:linear-gradient(#c4c4c4,#e2e2e2);"></div>
<div class="t" style="left:39.00px;top:88.22px;font-size:9.9px;line-height:9.9px;color:#1e1e1e;transform:scaleY(0.88);transform-origin:0 8.38px;">Generator Library</div>
<svg class="b" style="left:187.2px;top:88.8px" width="9" height="9" viewBox="0 0 9 9"><rect x="0.6" y="0.6" width="7.8" height="7.8" fill="none" stroke="#333" stroke-width="1.1"/><path d="M0.6 2.8 H8.4" stroke="#333" stroke-width="1.1"/></svg>
<svg class="b" style="left:200px;top:88.8px" width="10" height="9" viewBox="0 0 10 9"><rect x="0.6" y="0.6" width="8.8" height="7.8" rx="0.8" fill="none" stroke="#333" stroke-width="1.1"/><path d="M2.6 2.2 L7.4 6.8 M7.4 2.2 L2.6 6.8" stroke="#111" stroke-width="2.1"/></svg>
<div class="b" style="left:41.30px;top:106.70px;width:154.00px;height:515.60px;background:#fff;"></div>
<div class="b" style="left:41.3px;top:106.7px;width:153.7px;height:515.3px;overflow:hidden;">
<div class="t" style="left:30.70px;top:5.74px;font-size:11.7px;line-height:12px;color:#1a1a1a;transform:scaleY(1.1);transform-origin:0 10.16px;">MOS_VAR*</div>
<svg class="b" style="left:11.90px;top:6.60px" width="7" height="10" viewBox="0 0 7 10"><path d="M0.7 0.7 L6.2 5 L0.7 9.3 Z" fill="none" stroke="#444" stroke-width="1.1"/></svg>
<div class="t" style="left:30.70px;top:24.49px;font-size:11.7px;line-height:12px;color:#1a1a1a;transform:scaleY(1.1);transform-origin:0 10.16px;">BJT</div>
<svg class="b" style="left:11.90px;top:25.35px" width="7" height="10" viewBox="0 0 7 10"><path d="M0.7 0.7 L6.2 5 L0.7 9.3 Z" fill="none" stroke="#444" stroke-width="1.1"/></svg>
<div class="t" style="left:30.70px;top:43.24px;font-size:11.7px;line-height:12px;color:#1a1a1a;transform:scaleY(1.1);transform-origin:0 10.16px;">CCMetal</div>
<svg class="b" style="left:11.90px;top:44.10px" width="7" height="10" viewBox="0 0 7 10"><path d="M0.7 0.7 L6.2 5 L0.7 9.3 Z" fill="none" stroke="#444" stroke-width="1.1"/></svg>
<div class="t" style="left:30.70px;top:61.99px;font-size:11.7px;line-height:12px;color:#1a1a1a;transform:scaleY(1.1);transform-origin:0 10.16px;">CD_COX2</div>
<svg class="b" style="left:11.90px;top:62.85px" width="7" height="10" viewBox="0 0 7 10"><path d="M0.7 0.7 L6.2 5 L0.7 9.3 Z" fill="none" stroke="#444" stroke-width="1.1"/></svg>
<div class="t" style="left:30.70px;top:80.74px;font-size:11.7px;line-height:12px;color:#1a1a1a;transform:scaleY(1.1);transform-origin:0 10.16px;">GateCap</div>
<svg class="b" style="left:11.90px;top:81.60px" width="7" height="10" viewBox="0 0 7 10"><path d="M0.7 0.7 L6.2 5 L0.7 9.3 Z" fill="none" stroke="#444" stroke-width="1.1"/></svg>
<div class="t" style="left:30.70px;top:99.49px;font-size:11.7px;line-height:12px;color:#1a1a1a;transform:scaleY(1.1);transform-origin:0 10.16px;">JunctionCap</div>
<svg class="b" style="left:11.90px;top:100.35px" width="7" height="10" viewBox="0 0 7 10"><path d="M0.7 0.7 L6.2 5 L0.7 9.3 Z" fill="none" stroke="#444" stroke-width="1.1"/></svg>
<div class="t" style="left:30.70px;top:118.24px;font-size:11.7px;line-height:12px;color:#1a1a1a;transform:scaleY(1.1);transform-origin:0 10.16px;">KelvinRes</div>
<svg class="b" style="left:11.90px;top:119.10px" width="7" height="10" viewBox="0 0 7 10"><path d="M0.7 0.7 L6.2 5 L0.7 9.3 Z" fill="none" stroke="#444" stroke-width="1.1"/></svg>
<div class="t" style="left:30.70px;top:136.99px;font-size:11.7px;line-height:12px;color:#1a1a1a;transform:scaleY(1.1);transform-origin:0 10.16px;">MC2</div>
<svg class="b" style="left:11.90px;top:137.85px" width="7" height="10" viewBox="0 0 7 10"><path d="M0.7 0.7 L6.2 5 L0.7 9.3 Z" fill="none" stroke="#444" stroke-width="1.1"/></svg>
<div class="t" style="left:30.70px;top:155.74px;font-size:11.7px;line-height:12px;color:#1a1a1a;transform:scaleY(1.1);transform-origin:0 10.16px;">MIS_Intra_Line_Cap</div>
<svg class="b" style="left:11.90px;top:156.60px" width="7" height="10" viewBox="0 0 7 10"><path d="M0.7 0.7 L6.2 5 L0.7 9.3 Z" fill="none" stroke="#444" stroke-width="1.1"/></svg>
<div class="t" style="left:30.70px;top:174.49px;font-size:11.7px;line-height:12px;color:#1a1a1a;transform:scaleY(1.1);transform-origin:0 10.16px;">MIS_RES</div>
<svg class="b" style="left:11.90px;top:175.35px" width="7" height="10" viewBox="0 0 7 10"><path d="M0.7 0.7 L6.2 5 L0.7 9.3 Z" fill="none" stroke="#444" stroke-width="1.1"/></svg>
<div class="t" style="left:30.70px;top:193.24px;font-size:11.7px;line-height:12px;color:#1a1a1a;transform:scaleY(1.1);transform-origin:0 10.16px;">MOM</div>
<svg class="b" style="left:11.90px;top:194.10px" width="7" height="10" viewBox="0 0 7 10"><path d="M0.7 0.7 L6.2 5 L0.7 9.3 Z" fill="none" stroke="#444" stroke-width="1.1"/></svg>
<div class="t" style="left:30.70px;top:211.99px;font-size:11.7px;line-height:12px;color:#1a1a1a;transform:scaleY(1.1);transform-origin:0 10.16px;">MetalRes</div>
<svg class="b" style="left:11.90px;top:212.85px" width="7" height="10" viewBox="0 0 7 10"><path d="M0.7 0.7 L6.2 5 L0.7 9.3 Z" fill="none" stroke="#444" stroke-width="1.1"/></svg>
<div class="t" style="left:30.70px;top:230.74px;font-size:11.7px;line-height:12px;color:#1a1a1a;transform:scaleY(1.1);transform-origin:0 10.16px;">NewStress_Priority12</div>
<svg class="b" style="left:11.90px;top:231.60px" width="7" height="10" viewBox="0 0 7 10"><path d="M0.7 0.7 L6.2 5 L0.7 9.3 Z" fill="none" stroke="#444" stroke-width="1.1"/></svg>
<div class="t" style="left:30.70px;top:249.49px;font-size:11.7px;line-height:12px;color:#1a1a1a;transform:scaleY(1.1);transform-origin:0 10.16px;">NewStress_Priority3</div>
<svg class="b" style="left:11.90px;top:250.35px" width="7" height="10" viewBox="0 0 7 10"><path d="M0.7 0.7 L6.2 5 L0.7 9.3 Z" fill="none" stroke="#444" stroke-width="1.1"/></svg>
<div class="t" style="left:30.70px;top:268.24px;font-size:11.7px;line-height:12px;color:#1a1a1a;transform:scaleY(1.1);transform-origin:0 10.16px;">NewStress_Priority4</div>
<svg class="b" style="left:11.90px;top:269.10px" width="7" height="10" viewBox="0 0 7 10"><path d="M0.7 0.7 L6.2 5 L0.7 9.3 Z" fill="none" stroke="#444" stroke-width="1.1"/></svg>
<div class="t" style="left:30.70px;top:286.99px;font-size:11.7px;line-height:12px;color:#1a1a1a;transform:scaleY(1.1);transform-origin:0 10.16px;">Pawl_CT</div>
<svg class="b" style="left:11.90px;top:287.85px" width="7" height="10" viewBox="0 0 7 10"><path d="M0.7 0.7 L6.2 5 L0.7 9.3 Z" fill="none" stroke="#444" stroke-width="1.1"/></svg>
<div class="t" style="left:30.70px;top:305.74px;font-size:11.7px;line-height:12px;color:#1a1a1a;transform:scaleY(1.1);transform-origin:0 10.16px;">Pawl_Via</div>
<svg class="b" style="left:11.90px;top:306.60px" width="7" height="10" viewBox="0 0 7 10"><path d="M0.7 0.7 L6.2 5 L0.7 9.3 Z" fill="none" stroke="#444" stroke-width="1.1"/></svg>
<div class="t" style="left:30.70px;top:324.49px;font-size:11.7px;line-height:12px;color:#1a1a1a;transform:scaleY(1.1);transform-origin:0 10.16px;">PolyDiffRes</div>
<svg class="b" style="left:11.90px;top:325.35px" width="7" height="10" viewBox="0 0 7 10"><path d="M0.7 0.7 L6.2 5 L0.7 9.3 Z" fill="none" stroke="#444" stroke-width="1.1"/></svg>
<div class="t" style="left:30.70px;top:343.24px;font-size:11.7px;line-height:12px;color:#1a1a1a;transform:scaleY(1.1);transform-origin:0 10.16px;">RFC</div>
<svg class="b" style="left:11.90px;top:344.10px" width="7" height="10" viewBox="0 0 7 10"><path d="M0.7 0.7 L6.2 5 L0.7 9.3 Z" fill="none" stroke="#444" stroke-width="1.1"/></svg>
<div class="t" style="left:30.70px;top:361.99px;font-size:11.7px;line-height:12px;color:#1a1a1a;transform:scaleY(1.1);transform-origin:0 10.16px;">RWellJunctionCap_Peri</div>
<svg class="b" style="left:11.90px;top:362.85px" width="7" height="10" viewBox="0 0 7 10"><path d="M0.7 0.7 L6.2 5 L0.7 9.3 Z" fill="none" stroke="#444" stroke-width="1.1"/></svg>
<div class="t" style="left:30.70px;top:380.74px;font-size:11.7px;line-height:12px;color:#1a1a1a;transform:scaleY(1.1);transform-origin:0 10.16px;">SMIC_PadFrame</div>
<svg class="b" style="left:11.90px;top:381.60px" width="7" height="10" viewBox="0 0 7 10"><path d="M0.7 0.7 L6.2 5 L0.7 9.3 Z" fill="none" stroke="#444" stroke-width="1.1"/></svg>
<div class="t" style="left:30.70px;top:399.49px;font-size:11.7px;line-height:12px;color:#1a1a1a;transform:scaleY(1.1);transform-origin:0 10.16px;">TestConnnection</div>
<svg class="b" style="left:11.90px;top:400.35px" width="7" height="10" viewBox="0 0 7 10"><path d="M0.7 0.7 L6.2 5 L0.7 9.3 Z" fill="none" stroke="#444" stroke-width="1.1"/></svg>
<div class="t" style="left:30.70px;top:418.24px;font-size:11.7px;line-height:12px;color:#1a1a1a;transform:scaleY(1.1);transform-origin:0 10.16px;">Var_Mis_CommonGate</div>
<svg class="b" style="left:11.90px;top:419.10px" width="7" height="10" viewBox="0 0 7 10"><path d="M0.7 0.7 L6.2 5 L0.7 9.3 Z" fill="none" stroke="#444" stroke-width="1.1"/></svg>
<div class="t" style="left:30.70px;top:436.99px;font-size:11.7px;line-height:12px;color:#1a1a1a;transform:scaleY(1.1);transform-origin:0 10.16px;">Var_Mis_CommonSD</div>
<svg class="b" style="left:11.90px;top:437.85px" width="7" height="10" viewBox="0 0 7 10"><path d="M0.7 0.7 L6.2 5 L0.7 9.3 Z" fill="none" stroke="#444" stroke-width="1.1"/></svg>
<div class="t" style="left:30.70px;top:455.74px;font-size:11.7px;line-height:12px;color:#1a1a1a;transform:scaleY(1.1);transform-origin:0 10.16px;">Var_Mis_Separate</div>
<svg class="b" style="left:11.90px;top:456.60px" width="7" height="10" viewBox="0 0 7 10"><path d="M0.7 0.7 L6.2 5 L0.7 9.3 Z" fill="none" stroke="#444" stroke-width="1.1"/></svg>
<div class="t" style="left:30.70px;top:474.49px;font-size:11.7px;line-height:12px;color:#1a1a1a;transform:scaleY(1.1);transform-origin:0 10.16px;">WPE</div>
<svg class="b" style="left:11.90px;top:475.35px" width="7" height="10" viewBox="0 0 7 10"><path d="M0.7 0.7 L6.2 5 L0.7 9.3 Z" fill="none" stroke="#444" stroke-width="1.1"/></svg>
<div class="t" style="left:30.70px;top:493.24px;font-size:11.7px;line-height:12px;color:#1a1a1a;transform:scaleY(1.1);transform-origin:0 10.16px;">WellJunctionCap_Peri</div>
<svg class="b" style="left:11.90px;top:494.10px" width="7" height="10" viewBox="0 0 7 10"><path d="M0.7 0.7 L6.2 5 L0.7 9.3 Z" fill="none" stroke="#444" stroke-width="1.1"/></svg>
<div class="t" style="left:30.70px;top:511.99px;font-size:11.7px;line-height:12px;color:#1a1a1a;transform:scaleY(1.1);transform-origin:0 10.16px;">Well_RES</div>
<svg class="b" style="left:11.90px;top:512.85px" width="7" height="10" viewBox="0 0 7 10"><path d="M0.7 0.7 L6.2 5 L0.7 9.3 Z" fill="none" stroke="#444" stroke-width="1.1"/></svg>
</div>
<div class="b" style="left:195.30px;top:106.70px;width:13.70px;height:515.60px;background:#c4c4c4;"></div>
<div class="b" style="left:195.30px;top:107.00px;width:13.70px;height:13.40px;background:#ececec;border:1px solid #7a7a7a;"></div>
<div class="b" style="left:195.30px;top:120.40px;width:13.70px;height:424.30px;background:#e8e8e8;border:1px solid #7a7a7a;border-top:none;"></div>
<div class="b" style="left:195.30px;top:608.40px;width:13.70px;height:13.20px;background:#ececec;border:1px solid #7a7a7a;"></div>
<div class="b" style="left:41.30px;top:622.30px;width:153.70px;height:13.20px;background:#c4c4c4;"></div>
<div class="b" style="left:41.30px;top:622.30px;width:13.70px;height:13.20px;background:#ececec;border:1px solid #7a7a7a;"></div>
<div class="b" style="left:55.00px;top:622.30px;width:117.50px;height:13.20px;background:#e8e8e8;border:1px solid #7a7a7a;border-left:none;"></div>
<div class="b" style="left:180.80px;top:622.30px;width:13.70px;height:13.20px;background:#ececec;border:1px solid #7a7a7a;"></div>
<div class="b" style="left:194.50px;top:622.30px;width:14.50px;height:13.20px;background:#e4e4e4;"></div>
<svg class="b" style="left:195.3px;top:107.2px" width="13.5" height="12.6" viewBox="0 0 13.5 12.6"><path d="M3.55 7.9 L6.75 4.699999999999999 L9.95 7.9" stroke="#1a1a1a" stroke-width="2.3" fill="none" stroke-linejoin="miter"/></svg>
<svg class="b" style="left:195.3px;top:608.6px" width="13.5" height="12.6" viewBox="0 0 13.5 12.6"><path d="M3.55 4.699999999999999 L6.75 7.9 L9.95 4.699999999999999" stroke="#1a1a1a" stroke-width="2.3" fill="none" stroke-linejoin="miter"/></svg>
<svg class="b" style="left:41.3px;top:622.5px" width="13.5" height="12.6" viewBox="0 0 13.5 12.6"><path d="M8.35 3.0999999999999996 L5.15 6.3 L8.35 9.5" stroke="#1a1a1a" stroke-width="2.3" fill="none" stroke-linejoin="miter"/></svg>
<svg class="b" style="left:180.8px;top:622.5px" width="13.5" height="12.6" viewBox="0 0 13.5 12.6"><path d="M5.15 3.0999999999999996 L8.35 6.3 L5.15 9.5" stroke="#1a1a1a" stroke-width="2.3" fill="none" stroke-linejoin="miter"/></svg>
<svg class="b" style="left:198.2px;top:324.6px" width="7" height="16.50" viewBox="0 0 7 16.50"><path d="M5.50 0.50 L0.5 5.60" stroke="#909090" stroke-width="0.9"/><path d="M6.30 1.40 L1.3 6.50" stroke="#fafafa" stroke-width="0.7"/><path d="M5.50 5.20 L0.5 10.30" stroke="#909090" stroke-width="0.9"/><path d="M6.30 6.10 L1.3 11.20" stroke="#fafafa" stroke-width="0.7"/><path d="M5.50 9.90 L0.5 15.00" stroke="#909090" stroke-width="0.9"/><path d="M6.30 10.80 L1.3 15.90" stroke="#fafafa" stroke-width="0.7"/></svg>
<svg class="b" style="left:106.4px;top:626.4px" width="23.2" height="7.4" viewBox="0 0 23.2 7.4"><path d="M6.92 0.5 L1.00 6.9" stroke="#909090" stroke-width="0.9"/><path d="M7.92 0.5 L2.00 6.9" stroke="#fafafa" stroke-width="0.7"/><path d="M11.52 0.5 L5.60 6.9" stroke="#909090" stroke-width="0.9"/><path d="M12.52 0.5 L6.60 6.9" stroke="#fafafa" stroke-width="0.7"/><path d="M16.12 0.5 L10.20 6.9" stroke="#909090" stroke-width="0.9"/><path d="M17.12 0.5 L11.20 6.9" stroke="#fafafa" stroke-width="0.7"/></svg>
<div class="b" style="left:219.30px;top:85.00px;width:629.70px;height:260.20px;background:#000;"></div>
<svg class="b" style="left:219.5px;top:85px" width="629.5" height="260.2" viewBox="219.5 85 629.5 260.2"><rect x="221.60" y="86.70" width="1.6" height="1.3" fill="#c8c800"/><rect x="276.50" y="86.70" width="1.6" height="1.3" fill="#c8c800"/><rect x="331.40" y="86.70" width="1.6" height="1.3" fill="#c8c800"/><rect x="386.30" y="86.70" width="1.6" height="1.3" fill="#c8c800"/><rect x="441.20" y="86.70" width="1.6" height="1.3" fill="#c8c800"/><rect x="496.10" y="86.70" width="1.6" height="1.3" fill="#c8c800"/><rect x="551.00" y="86.70" width="1.6" height="1.3" fill="#c8c800"/><rect x="605.90" y="86.70" width="1.6" height="1.3" fill="#c8c800"/><rect x="660.80" y="86.70" width="1.6" height="1.3" fill="#c8c800"/><rect x="715.70" y="86.70" width="1.6" height="1.3" fill="#c8c800"/><rect x="770.60" y="86.70" width="1.6" height="1.3" fill="#c8c800"/><rect x="825.50" y="86.70" width="1.6" height="1.3" fill="#c8c800"/><rect x="221.60" y="141.50" width="1.6" height="1.3" fill="#c8c800"/><rect x="276.50" y="141.50" width="1.6" height="1.3" fill="#c8c800"/><rect x="331.40" y="141.50" width="1.6" height="1.3" fill="#c8c800"/><rect x="386.30" y="141.50" width="1.6" height="1.3" fill="#c8c800"/><rect x="441.20" y="141.50" width="1.6" height="1.3" fill="#c8c800"/><rect x="496.10" y="141.50" width="1.6" height="1.3" fill="#c8c800"/><rect x="551.00" y="141.50" width="1.6" height="1.3" fill="#c8c800"/><rect x="605.90" y="141.50" width="1.6" height="1.3" fill="#c8c800"/><rect x="660.80" y="141.50" width="1.6" height="1.3" fill="#c8c800"/><rect x="715.70" y="141.50" width="1.6" height="1.3" fill="#c8c800"/><rect x="770.60" y="141.50" width="1.6" height="1.3" fill="#c8c800"/><rect x="825.50" y="141.50" width="1.6" height="1.3" fill="#c8c800"/><rect x="221.60" y="196.30" width="1.6" height="1.3" fill="#c8c800"/><rect x="276.50" y="196.30" width="1.6" height="1.3" fill="#c8c800"/><rect x="331.40" y="196.30" width="1.6" height="1.3" fill="#c8c800"/><rect x="386.30" y="196.30" width="1.6" height="1.3" fill="#c8c800"/><rect x="441.20" y="196.30" width="1.6" height="1.3" fill="#c8c800"/><rect x="496.10" y="196.30" width="1.6" height="1.3" fill="#c8c800"/><rect x="551.00" y="196.30" width="1.6" height="1.3" fill="#c8c800"/><rect x="605.90" y="196.30" width="1.6" height="1.3" fill="#c8c800"/><rect x="660.80" y="196.30" width="1.6" height="1.3" fill="#c8c800"/><rect x="715.70" y="196.30" width="1.6" height="1.3" fill="#c8c800"/><rect x="770.60" y="196.30" width="1.6" height="1.3" fill="#c8c800"/><rect x="825.50" y="196.30" width="1.6" height="1.3" fill="#c8c800"/><rect x="221.60" y="251.10" width="1.6" height="1.3" fill="#c8c800"/><rect x="276.50" y="251.10" width="1.6" height="1.3" fill="#c8c800"/><rect x="331.40" y="251.10" width="1.6" height="1.3" fill="#c8c800"/><rect x="386.30" y="251.10" width="1.6" height="1.3" fill="#c8c800"/><rect x="441.20" y="251.10" width="1.6" height="1.3" fill="#c8c800"/><rect x="496.10" y="251.10" width="1.6" height="1.3" fill="#c8c800"/><rect x="551.00" y="251.10" width="1.6" height="1.3" fill="#c8c800"/><rect x="605.90" y="251.10" width="1.6" height="1.3" fill="#c8c800"/><rect x="660.80" y="251.10" width="1.6" height="1.3" fill="#c8c800"/><rect x="715.70" y="251.10" width="1.6" height="1.3" fill="#c8c800"/><rect x="770.60" y="251.10" width="1.6" height="1.3" fill="#c8c800"/><rect x="825.50" y="251.10" width="1.6" height="1.3" fill="#c8c800"/><rect x="221.60" y="305.90" width="1.6" height="1.3" fill="#c8c800"/><rect x="276.50" y="305.90" width="1.6" height="1.3" fill="#c8c800"/><rect x="331.40" y="305.90" width="1.6" height="1.3" fill="#c8c800"/><rect x="386.30" y="305.90" width="1.6" height="1.3" fill="#c8c800"/><rect x="441.20" y="305.90" width="1.6" height="1.3" fill="#c8c800"/><rect x="496.10" y="305.90" width="1.6" height="1.3" fill="#c8c800"/><rect x="551.00" y="305.90" width="1.6" height="1.3" fill="#c8c800"/><rect x="605.90" y="305.90" width="1.6" height="1.3" fill="#c8c800"/><rect x="660.80" y="305.90" width="1.6" height="1.3" fill="#c8c800"/><rect x="715.70" y="305.90" width="1.6" height="1.3" fill="#c8c800"/><rect x="770.60" y="305.90" width="1.6" height="1.3" fill="#c8c800"/><rect x="825.50" y="305.90" width="1.6" height="1.3" fill="#c8c800"/><rect x="394.90" y="214.00" width="27.20" height="32.50" fill="url(#pDotC)" stroke="#00d8d8" stroke-width="1.1"/><path d="M402.3 229.7 H413.5 M407.9 224.1 V235.3" stroke="#10c010" stroke-width="1.6"/><path d="M458.2 174 H470.2 V273.5 H579.3 V175.5 H486 V165 H591.2 V285.6 H458.2 Z" fill="url(#pHatchR)" stroke="#e80000" stroke-width="1.1"/><rect x="459.30" y="162.60" width="10.00" height="126.40" fill="url(#pDotC)" stroke="#00d8d8" stroke-width="1.1"/><rect x="518.60" y="139.10" width="33.90" height="26.50" fill="url(#pDotC)" stroke="#00d8d8" stroke-width="1.1"/><rect x="486.60" y="170.70" width="74.40" height="16.90" fill="url(#pDotC)" stroke="#00d8d8" stroke-width="1.1"/><rect x="488.60" y="196.40" width="5.80" height="57.00" fill="url(#pDotC)" stroke="#00d8d8" stroke-width="1.1"/><rect x="557.90" y="196.40" width="5.80" height="57.00" fill="url(#pDotC)" stroke="#00d8d8" stroke-width="1.1"/><path d="M496.2 197.4 V252.5 M498.2 197.4 V252.5 M551.4 197.4 V252.5 M553.8 197.4 V252.5" stroke="#f00000" stroke-width="1.3"/><rect x="499.6" y="191.5" width="50.2" height="65.2" fill="url(#pHatchC)" stroke="#00d8d8" stroke-width="1.1"/><rect x="499.9" y="197.6" width="49.6" height="55" fill="url(#pHatchR)" opacity="0.55"/><rect x="499.9" y="197.6" width="49.6" height="55" fill="url(#pDotW)"/><path d="M499.9 197.6 H549.6 M499.9 252.6 H549.6" stroke="#c00000" stroke-width="1"/><rect x="499.60" y="256.60" width="50.80" height="6.90" fill="url(#pHatchC)" stroke="#00d8d8" stroke-width="1.1"/><rect x="498.60" y="265.20" width="55.00" height="5.10" fill="url(#pDotC)" stroke="#00d8d8" stroke-width="1.1"/><rect x="510.60" y="296.40" width="32.80" height="27.20" fill="url(#pDotC)" stroke="#00d8d8" stroke-width="1.1"/></svg>
<div class="b" style="left:219.50px;top:350.30px;width:629.50px;height:15.70px;background:linear-gradient(#bebebe,#dedede);"></div>
<div class="b" style="left:219.50px;top:366.00px;width:629.50px;height:1.00px;background:#eeeeee;"></div>
<div class="t" style="left:222.80px;top:353.32px;font-size:9.9px;line-height:9.9px;color:#1e1e1e;transform:scaleY(0.88);transform-origin:0 8.38px;">GDSII Layout</div>
<svg class="b" style="left:214.6px;top:352.4px" width="5.6" height="22.70" viewBox="0 0 5.6 22.70"><path d="M4.10 0.50 L0.5 4.40" stroke="#a0a0a0" stroke-width="0.9"/><path d="M4.90 1.40 L1.3 5.30" stroke="#fafafa" stroke-width="0.7"/><path d="M4.10 6.10 L0.5 10.00" stroke="#a0a0a0" stroke-width="0.9"/><path d="M4.90 7.00 L1.3 10.90" stroke="#fafafa" stroke-width="0.7"/><path d="M4.10 11.70 L0.5 15.60" stroke="#a0a0a0" stroke-width="0.9"/><path d="M4.90 12.60 L1.3 16.50" stroke="#fafafa" stroke-width="0.7"/><path d="M4.10 17.30 L0.5 21.20" stroke="#a0a0a0" stroke-width="0.9"/><path d="M4.90 18.20 L1.3 22.10" stroke="#fafafa" stroke-width="0.7"/></svg>
<svg class="b" style="left:822px;top:353.8px" width="9" height="9" viewBox="0 0 9 9"><rect x="0.6" y="0.6" width="7.8" height="7.8" fill="none" stroke="#333" stroke-width="1.1"/><path d="M0.6 2.8 H8.4" stroke="#333" stroke-width="1.1"/></svg>
<svg class="b" style="left:834px;top:353.8px" width="10" height="9" viewBox="0 0 10 9"><rect x="0.6" y="0.6" width="8.8" height="7.8" rx="0.8" fill="none" stroke="#333" stroke-width="1.1"/><path d="M2.6 2.2 L7.4 6.8 M7.4 2.2 L2.6 6.8" stroke="#111" stroke-width="2.1"/></svg>
<svg class="b" style="left:523px;top:345.6px" width="29.0" height="4.6" viewBox="0 0 29.0 4.6"><path d="M4.68 0.5 L1.00 4.1" stroke="#9a9a9a" stroke-width="0.9"/><path d="M5.68 0.5 L2.00 4.1" stroke="#fafafa" stroke-width="0.7"/><path d="M10.28 0.5 L6.60 4.1" stroke="#9a9a9a" stroke-width="0.9"/><path d="M11.28 0.5 L7.60 4.1" stroke="#fafafa" stroke-width="0.7"/><path d="M15.88 0.5 L12.20 4.1" stroke="#9a9a9a" stroke-width="0.9"/><path d="M16.88 0.5 L13.20 4.1" stroke="#fafafa" stroke-width="0.7"/><path d="M21.48 0.5 L17.80 4.1" stroke="#9a9a9a" stroke-width="0.9"/><path d="M22.48 0.5 L18.80 4.1" stroke="#fafafa" stroke-width="0.7"/></svg>
<svg class="b" style="left:414px;top:51.8px" width="27.6" height="4" viewBox="0 0 27.6 4"><path d="M4.20 0.5 L1.00 3.5" stroke="#b0b0b0" stroke-width="0.9"/><path d="M5.20 0.5 L2.00 3.5" stroke="#fafafa" stroke-width="0.7"/><path d="M9.60 0.5 L6.40 3.5" stroke="#b0b0b0" stroke-width="0.9"/><path d="M10.60 0.5 L7.40 3.5" stroke="#fafafa" stroke-width="0.7"/><path d="M15.00 0.5 L11.80 3.5" stroke="#b0b0b0" stroke-width="0.9"/><path d="M16.00 0.5 L12.80 3.5" stroke="#fafafa" stroke-width="0.7"/><path d="M20.40 0.5 L17.20 3.5" stroke="#b0b0b0" stroke-width="0.9"/><path d="M21.40 0.5 L18.20 3.5" stroke="#fafafa" stroke-width="0.7"/></svg>
<div class="b" style="left:219.80px;top:367.00px;width:614.80px;height:259.20px;background:#000;"></div>
<svg class="b" style="left:219.8px;top:367px" width="614.8" height="259.2" viewBox="219.8 367 614.8 259.2"><rect x="221.2" y="368.6" width="612.2" height="257.4" fill="url(#pBrick)"/><rect x="221.2" y="368.6" width="612.2" height="257.4" fill="url(#pYDot)"/><rect x="399.60" y="477.60" width="44.80" height="53.60" fill="url(#pHatchCdim)" stroke="#20d8d8" stroke-width="1.0"/><path d="M221.9 368.6 V626" stroke="#46aaaa" stroke-width="1.1"/><rect x="500.70" y="368.60" width="54.40" height="42.40" fill="url(#pDotCdim)" stroke="#20d8d8" stroke-width="1.0"/><rect x="501.80" y="556.70" width="53.30" height="44.60" fill="url(#pDotCdim)" stroke="#20d8d8" stroke-width="1.0"/><path d="M462.7 414.9 H611 V592.6 H462.7 Z M473.5 434.4 V574.5 H591.9 V434.4 Z" fill="#000" fill-rule="evenodd"/><path d="M462.7 414.9 H611 V592.6 H462.7 Z M473.5 434.4 V574.5 H591.9 V434.4 Z" fill="url(#pHatchRg)" fill-rule="evenodd"/><path d="M462.7 414.9 H611 V592.6 H462.7 Z M473.5 434.4 V574.5 H591.9 V434.4 Z" fill="url(#pBrick)" fill-rule="evenodd"/><path d="M462.7 415.4 H611 V592.3 H462.7 M462.7 433.6 H591.9 V574.5 H462.7" fill="none" stroke="#e00000" stroke-width="0.9"/><rect x="440.00" y="410.50" width="175.50" height="187.00" fill="none" stroke="#e0e020" stroke-width="1.2"/><rect x="473.30" y="411.80" width="109.70" height="132.70" fill="none" stroke="#20d8d8" stroke-width="1.0"/><rect x="599.00" y="580.90" width="2.8" height="2.8" fill="#f0f020"/><rect x="599.00" y="460.90" width="2.8" height="2.8" fill="#f0f020"/><rect x="584.00" y="595.90" width="2.8" height="2.8" fill="#f0f020"/><rect x="524.00" y="580.90" width="2.8" height="2.8" fill="#f0f020"/><rect x="509.00" y="595.90" width="2.8" height="2.8" fill="#f0f020"/><rect x="599.00" y="475.90" width="2.8" height="2.8" fill="#f0f020"/><rect x="599.00" y="565.90" width="2.8" height="2.8" fill="#f0f020"/><rect x="599.00" y="595.90" width="2.8" height="2.8" fill="#f0f020"/><rect x="464.00" y="520.90" width="2.8" height="2.8" fill="#f0f020"/><rect x="524.00" y="595.90" width="2.8" height="2.8" fill="#f0f020"/><rect x="539.00" y="415.90" width="2.8" height="2.8" fill="#f0f020"/><rect x="599.00" y="490.90" width="2.8" height="2.8" fill="#f0f020"/><rect x="464.00" y="415.90" width="2.8" height="2.8" fill="#f0f020"/><rect x="464.00" y="535.90" width="2.8" height="2.8" fill="#f0f020"/><rect x="554.00" y="415.90" width="2.8" height="2.8" fill="#f0f020"/><rect x="539.00" y="430.90" width="2.8" height="2.8" fill="#f0f020"/><rect x="479.00" y="415.90" width="2.8" height="2.8" fill="#f0f020"/><rect x="599.00" y="505.90" width="2.8" height="2.8" fill="#f0f020"/><rect x="464.00" y="430.90" width="2.8" height="2.8" fill="#f0f020"/><rect x="554.00" y="430.90" width="2.8" height="2.8" fill="#f0f020"/><rect x="464.00" y="550.90" width="2.8" height="2.8" fill="#f0f020"/><rect x="449.00" y="595.90" width="2.8" height="2.8" fill="#f0f020"/><rect x="569.00" y="415.90" width="2.8" height="2.8" fill="#f0f020"/><rect x="479.00" y="430.90" width="2.8" height="2.8" fill="#f0f020"/><rect x="569.00" y="430.90" width="2.8" height="2.8" fill="#f0f020"/><rect x="464.00" y="445.90" width="2.8" height="2.8" fill="#f0f020"/><rect x="464.00" y="565.90" width="2.8" height="2.8" fill="#f0f020"/><rect x="539.00" y="580.90" width="2.8" height="2.8" fill="#f0f020"/><rect x="464.00" y="460.90" width="2.8" height="2.8" fill="#f0f020"/><rect x="464.00" y="580.90" width="2.8" height="2.8" fill="#f0f020"/><rect x="494.00" y="415.90" width="2.8" height="2.8" fill="#f0f020"/><rect x="554.00" y="580.90" width="2.8" height="2.8" fill="#f0f020"/><rect x="539.00" y="595.90" width="2.8" height="2.8" fill="#f0f020"/><rect x="479.00" y="580.90" width="2.8" height="2.8" fill="#f0f020"/><rect x="464.00" y="595.90" width="2.8" height="2.8" fill="#f0f020"/><rect x="464.00" y="475.90" width="2.8" height="2.8" fill="#f0f020"/><rect x="569.00" y="580.90" width="2.8" height="2.8" fill="#f0f020"/><rect x="494.00" y="430.90" width="2.8" height="2.8" fill="#f0f020"/><rect x="554.00" y="595.90" width="2.8" height="2.8" fill="#f0f020"/><rect x="479.00" y="595.90" width="2.8" height="2.8" fill="#f0f020"/><rect x="464.00" y="490.90" width="2.8" height="2.8" fill="#f0f020"/><rect x="599.00" y="520.90" width="2.8" height="2.8" fill="#f0f020"/><rect x="569.00" y="595.90" width="2.8" height="2.8" fill="#f0f020"/><rect x="584.00" y="415.90" width="2.8" height="2.8" fill="#f0f020"/><rect x="464.00" y="505.90" width="2.8" height="2.8" fill="#f0f020"/><rect x="509.00" y="415.90" width="2.8" height="2.8" fill="#f0f020"/><rect x="494.00" y="580.90" width="2.8" height="2.8" fill="#f0f020"/><rect x="584.00" y="430.90" width="2.8" height="2.8" fill="#f0f020"/><rect x="599.00" y="415.90" width="2.8" height="2.8" fill="#f0f020"/><rect x="599.00" y="535.90" width="2.8" height="2.8" fill="#f0f020"/><rect x="524.00" y="415.90" width="2.8" height="2.8" fill="#f0f020"/><rect x="509.00" y="430.90" width="2.8" height="2.8" fill="#f0f020"/><rect x="599.00" y="430.90" width="2.8" height="2.8" fill="#f0f020"/><rect x="494.00" y="595.90" width="2.8" height="2.8" fill="#f0f020"/><rect x="524.00" y="430.90" width="2.8" height="2.8" fill="#f0f020"/><rect x="599.00" y="550.90" width="2.8" height="2.8" fill="#f0f020"/><rect x="599.00" y="445.90" width="2.8" height="2.8" fill="#f0f020"/><rect x="584.00" y="580.90" width="2.8" height="2.8" fill="#f0f020"/><rect x="509.00" y="580.90" width="2.8" height="2.8" fill="#f0f020"/><rect x="468.20" y="439.20" width="119.00" height="130.20" fill="none" stroke="#f4f430" stroke-width="2.4"/><rect x="474.30" y="440.20" width="99.70" height="103.20" fill="none" stroke="#20d8d8" stroke-width="1.0"/><rect x="481.2" y="452.2" width="91.5" height="91.4" fill="#000"/><rect x="481.2" y="452.2" width="91.5" height="91.4" fill="url(#pHatchCt)"/><rect x="481.2" y="452.2" width="91.5" height="91.4" fill="url(#pHatchC2t)"/><rect x="481.2" y="452.2" width="91.5" height="91.4" fill="url(#pRedDot)"/><rect x="481.2" y="452.2" width="91.5" height="91.4" fill="url(#pDotWg)"/><rect x="481.2" y="452.2" width="91.5" height="91.4" fill="none" stroke="#20d8d8" stroke-width="1"/><rect x="481" y="452" width="2" height="92" fill="#00e800"/><rect x="444.5" y="415.5" width="18" height="176.4" fill="#00f000" stroke="#30e8d0" stroke-width="1"/><rect x="445" y="416" width="17" height="175.4" fill="url(#pDotG)"/><rect x="482" y="547.2" width="90.6" height="9.2" fill="#00f000" stroke="#30e8d0" stroke-width="0.8"/></svg>
<div class="b" style="left:834.60px;top:367.70px;width:13.40px;height:258.50px;background:#c4c4c4;"></div>
<div class="b" style="left:834.60px;top:367.70px;width:13.40px;height:12.60px;background:#ececec;border:1px solid #7a7a7a;"></div>
<div class="b" style="left:834.60px;top:465.60px;width:13.40px;height:58.40px;background:#e8e8e8;border:1px solid #7a7a7a;"></div>
<div class="b" style="left:834.60px;top:613.30px;width:13.40px;height:12.70px;background:#ececec;border:1px solid #7a7a7a;"></div>
<div class="b" style="left:219.80px;top:626.50px;width:614.20px;height:13.80px;background:#c4c4c4;"></div>
<div class="b" style="left:220.80px;top:626.50px;width:13.20px;height:13.80px;background:#ececec;border:1px solid #7a7a7a;"></div>
<div class="b" style="left:252.60px;top:626.50px;width:547.10px;height:13.80px;background:#e8e8e8;border:1px solid #7a7a7a;"></div>
<div class="b" style="left:820.00px;top:626.50px;width:13.40px;height:13.80px;background:#ececec;border:1px solid #7a7a7a;"></div>
<svg class="b" style="left:834.6px;top:367.7px" width="13.5" height="12.6" viewBox="0 0 13.5 12.6"><path d="M3.55 7.9 L6.75 4.699999999999999 L9.95 7.9" stroke="#1a1a1a" stroke-width="2.3" fill="none" stroke-linejoin="miter"/></svg>
<svg class="b" style="left:834.6px;top:613.3px" width="13.5" height="12.6" viewBox="0 0 13.5 12.6"><path d="M3.55 4.699999999999999 L6.75 7.9 L9.95 4.699999999999999" stroke="#1a1a1a" stroke-width="2.3" fill="none" stroke-linejoin="miter"/></svg>
<svg class="b" style="left:220.8px;top:627px" width="13.5" height="12.6" viewBox="0 0 13.5 12.6"><path d="M8.35 3.0999999999999996 L5.15 6.3 L8.35 9.5" stroke="#1a1a1a" stroke-width="2.3" fill="none" stroke-linejoin="miter"/></svg>
<svg class="b" style="left:820px;top:627px" width="13.5" height="12.6" viewBox="0 0 13.5 12.6"><path d="M5.15 3.0999999999999996 L8.35 6.3 L5.15 9.5" stroke="#1a1a1a" stroke-width="2.3" fill="none" stroke-linejoin="miter"/></svg>
<svg class="b" style="left:838px;top:486.6px" width="7" height="15.90" viewBox="0 0 7 15.90"><path d="M5.50 0.50 L0.5 5.20" stroke="#909090" stroke-width="0.9"/><path d="M6.30 1.40 L1.3 6.10" stroke="#fafafa" stroke-width="0.7"/><path d="M5.50 5.10 L0.5 9.80" stroke="#909090" stroke-width="0.9"/><path d="M6.30 6.00 L1.3 10.70" stroke="#fafafa" stroke-width="0.7"/><path d="M5.50 9.70 L0.5 14.40" stroke="#909090" stroke-width="0.9"/><path d="M6.30 10.60 L1.3 15.30" stroke="#fafafa" stroke-width="0.7"/></svg>
<svg class="b" style="left:517px;top:630px" width="23.2" height="7.4" viewBox="0 0 23.2 7.4"><path d="M6.92 0.5 L1.00 6.9" stroke="#909090" stroke-width="0.9"/><path d="M7.92 0.5 L2.00 6.9" stroke="#fafafa" stroke-width="0.7"/><path d="M11.52 0.5 L5.60 6.9" stroke="#909090" stroke-width="0.9"/><path d="M12.52 0.5 L6.60 6.9" stroke="#fafafa" stroke-width="0.7"/><path d="M16.12 0.5 L10.20 6.9" stroke="#909090" stroke-width="0.9"/><path d="M17.12 0.5 L11.20 6.9" stroke="#fafafa" stroke-width="0.7"/></svg>
<svg class="b" style="left:476px;top:25px" width="14" height="19" viewBox="476 25 14 19"><path d="M478.1 26.7 L486.2 34.4 L482.6 34.7 L485.8 41.3 L483.7 42.2 L480.7 35.7 L478.2 38.4 Z" fill="#1c2450" stroke="#fff" stroke-width="0.5" stroke-opacity="0.6"/><path d="M479.2 29.5 L479.4 35.4 L481.6 33.6 Z" fill="#4a5aa8"/></svg>
<div class="b" style="left:1.80px;top:642.70px;width:73.50px;height:20.80px;border:1px solid #c0c0c0;border-right-color:#f4f4f4;border-bottom-color:#f4f4f4;"></div>
<div class="b" style="left:79.50px;top:642.70px;width:150.20px;height:20.80px;border:1px solid #c0c0c0;border-right-color:#f4f4f4;border-bottom-color:#f4f4f4;"></div>
<div class="b" style="left:232.50px;top:642.70px;width:227.70px;height:20.80px;border:1px solid #c0c0c0;border-right-color:#f4f4f4;border-bottom-color:#f4f4f4;"></div>
<div class="b" style="left:464.00px;top:642.70px;width:226.50px;height:20.80px;border:1px solid #c0c0c0;border-right-color:#f4f4f4;border-bottom-color:#f4f4f4;"></div>
<div class="b" style="left:694.30px;top:642.70px;width:154.70px;height:20.80px;border:1px solid #c0c0c0;border-right-color:#f4f4f4;border-bottom-color:#f4f4f4;"></div>
<div class="t" style="left:4.20px;top:648.24px;font-size:12px;line-height:12px;color:#111;">Ready.</div>
<div class="t" style="left:235.70px;top:648.41px;font-size:11.8px;line-height:11.8px;color:#111;">Current Cell: TOP</div>
<div class="t" style="left:698.70px;top:648.50px;font-size:11.7px;line-height:11.7px;color:#111;">55.589um,6.791um</div>
<svg class="b" style="left:826px;top:644px" width="21" height="20" viewBox="0 0 21 20"><path d="M1.0 19.5 L20 0.5" stroke="#a4a4a4" stroke-width="0.9"/><path d="M2.4 19.5 L20 1.9" stroke="#fafafa" stroke-width="0.8"/><path d="M5.6 19.5 L20 5.1" stroke="#a4a4a4" stroke-width="0.9"/><path d="M7.0 19.5 L20 6.5" stroke="#fafafa" stroke-width="0.8"/><path d="M10.2 19.5 L20 9.7" stroke="#a4a4a4" stroke-width="0.9"/><path d="M11.6 19.5 L20 11.1" stroke="#fafafa" stroke-width="0.8"/><path d="M14.8 19.5 L20 14.3" stroke="#a4a4a4" stroke-width="0.9"/><path d="M16.2 19.5 L20 15.7" stroke="#fafafa" stroke-width="0.8"/></svg>
</body></html>
